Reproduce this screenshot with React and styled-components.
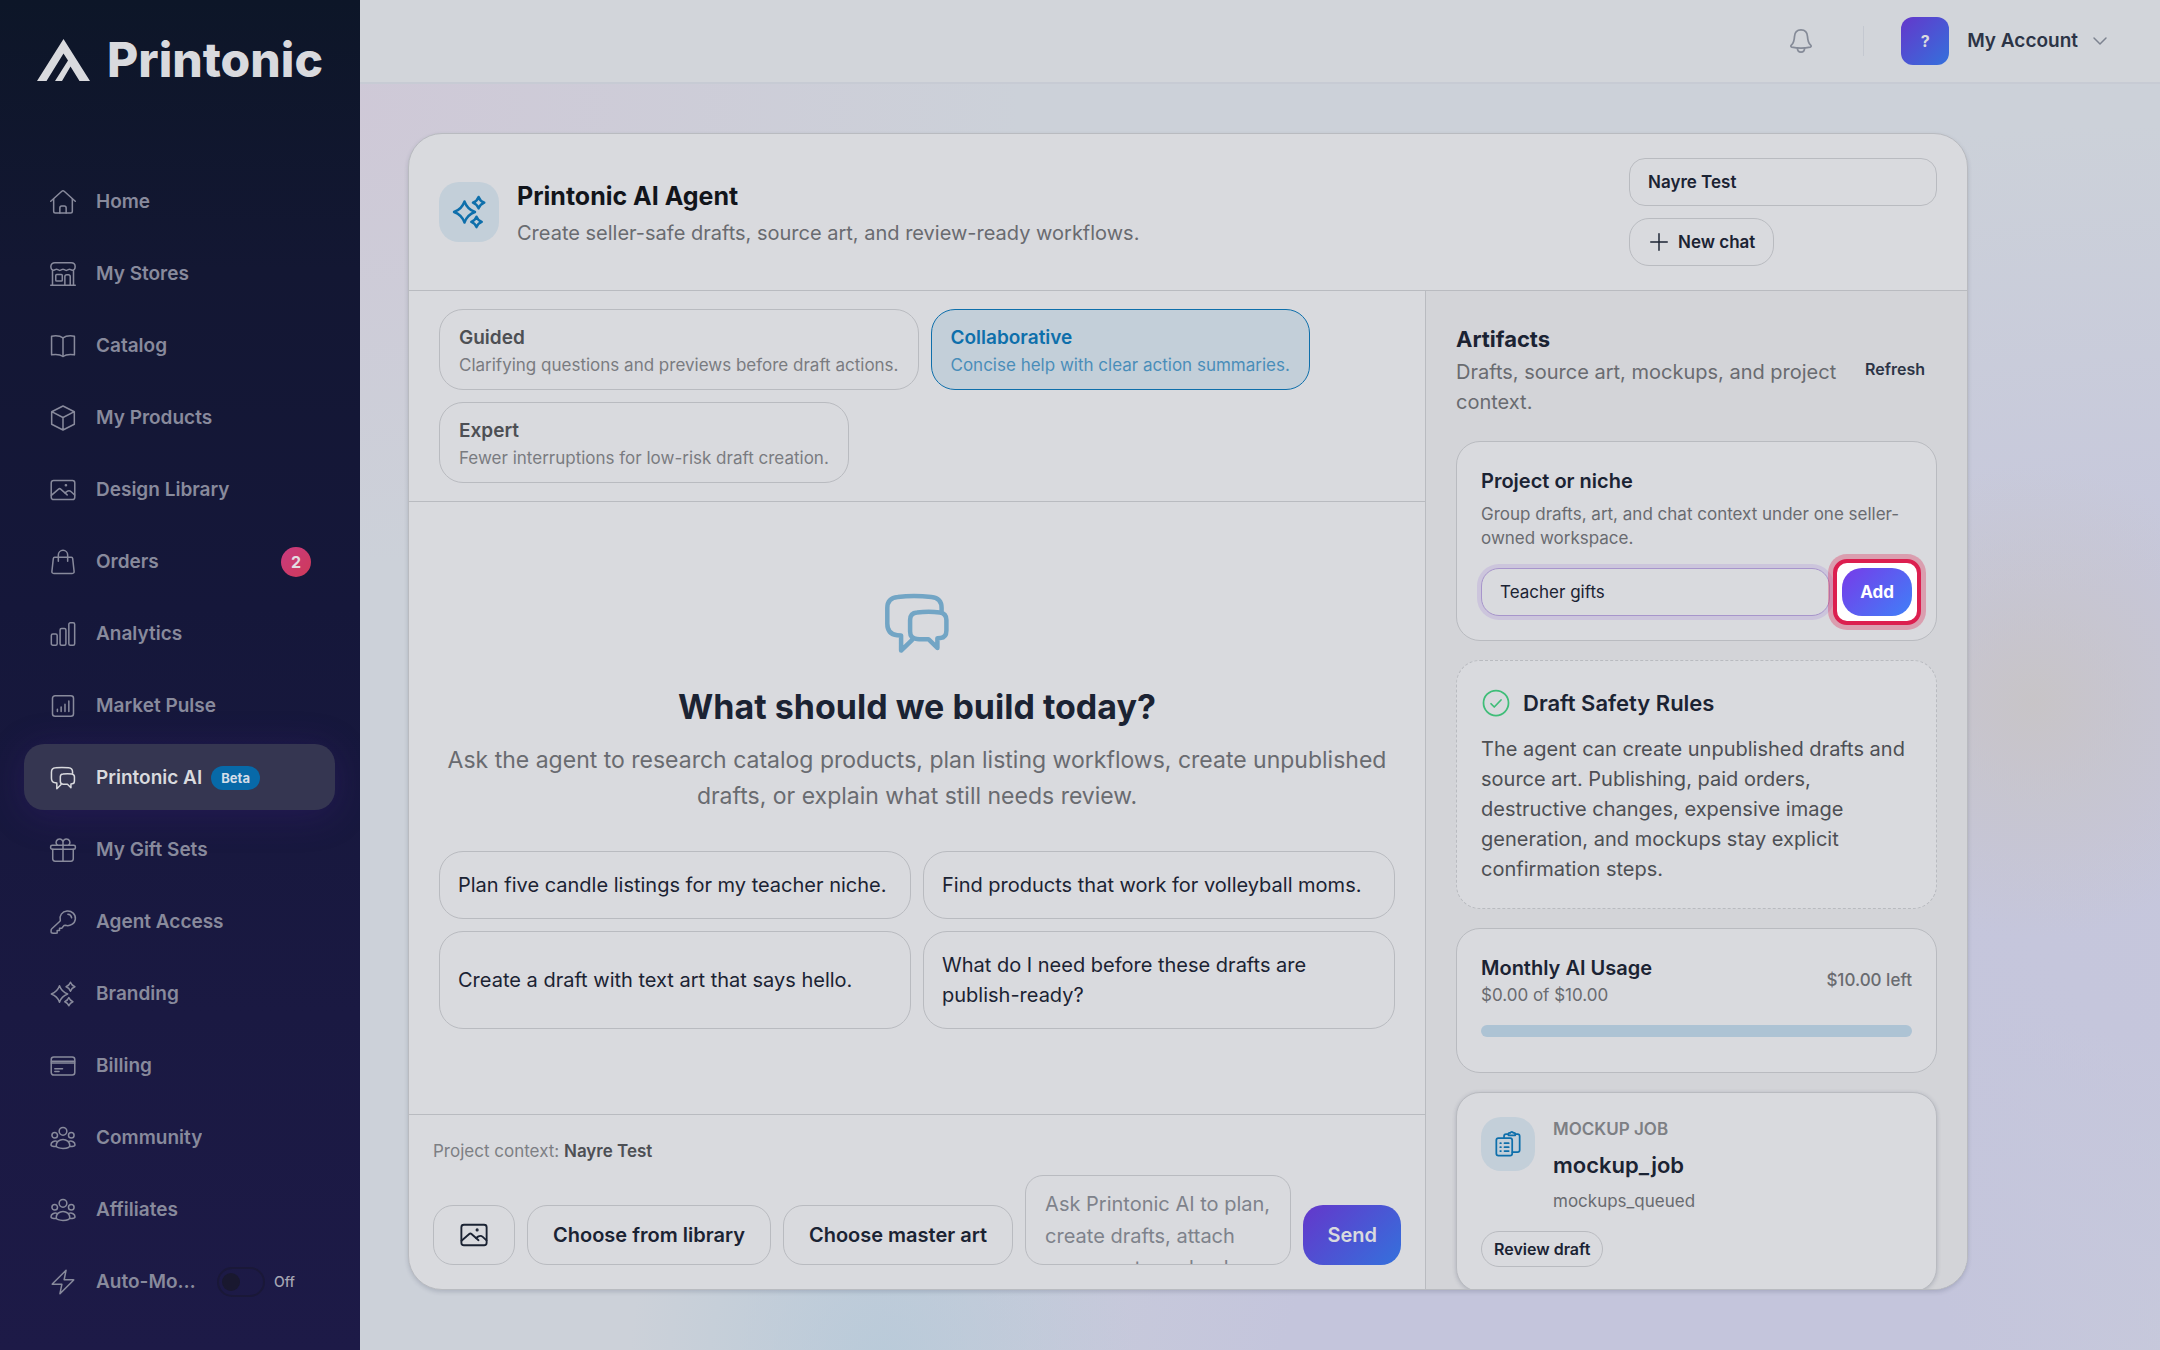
import React, { useState } from 'react';
import styled, { createGlobalStyle, css } from 'styled-components';

const c = {
  page: '#ccd1d9',
  surface: '#d9dade',
  panel: '#d3d4d8',
  line: '#b9bbc0',
  ink: '#1b2333',
  muted: '#696b70',
  soft: '#7d7f84',
  blue: '#0e6fab',
  blueSoft: '#c3cfd9',
  red: '#dc1f4f',
};

const GlobalStyle = createGlobalStyle`
  * {
    box-sizing: border-box;
  }

  body {
    margin: 0;
    background: ${c.page};
    color: ${c.ink};
    font-family: Inter, 'Open Sans', sans-serif;
    font-size: 20px;
    line-height: 30px;
    -webkit-font-smoothing: antialiased;
  }

  h1, h2, h3, p {
    margin: 0;
  }

  button, input, select, textarea {
    font: inherit;
    color: inherit;
    margin: 0;
  }

  button, select {
    cursor: pointer;
  }
`;

/* ---------- icons ---------- */

const Svg = styled.svg`
  flex: none;
  display: block;
  width: ${(p) => p.$size}px;
  height: ${(p) => p.$size}px;
  fill: none;
  stroke: currentColor;
  stroke-width: ${(p) => p.$stroke};
  stroke-linecap: round;
  stroke-linejoin: round;
`;

// four-pointed star around (x, y)
const star = (x, y, r) => {
  const k = r * 0.26;
  return `M${x} ${y - r}Q${x + k} ${y - k} ${x + r} ${y}Q${x + k} ${y + k} ${x} ${y + r}Q${x - k} ${y + k} ${x - r} ${y}Q${x - k} ${y - k} ${x} ${y - r}z`;
};

const icons = {
  home: (
    <>
      <path d="M1.5 11.4 11 2.8q1-.9 2 0l9.5 8.6" />
      <path d="M4 9.4v10.6q0 1.5 1.5 1.5h13q1.5 0 1.5-1.5V9.4" />
      <path d="M9.3 21.5v-4.4q0-1.6 1.6-1.6h2.2q1.6 0 1.6 1.6v4.4" />
    </>
  ),
  store: (
    <>
      <path d="M5 2.3h14c2 0 3.4 1.4 3.4 3.3s-1 3.2-2.4 3.2c-1.2 0-1.6-.9-2.4-.9s-1.5 1-2.8 1-1.9-1-2.8-1-1.5 1-2.8 1-1.9-1-2.8-1-1.2.9-2.4.9c-1.4 0-2.4-1.3-2.4-3.2S3 2.3 5 2.3z" />
      <path d="M3 9.2v12.200M21 9.2v12.200M1.5 21.7h21" />
      <rect x="5.8" y="12.4" width="5.6" height="5.7" rx=".8" />
      <path d="M13.6 21.5v-7.2q0-1.7 1.7-1.7h1.2q1.7 0 1.7 1.7v7.2" />
    </>
  ),
  book: (
    <>
      <path d="M12 5C9.5 3.2 6 3 2.2 3.6v16C6 19 9.5 19.2 12 21c2.5-1.8 6-2 9.8-1.4v-16C18 3 14.5 3.2 12 5z" />
      <path d="M12 5v16" />
    </>
  ),
  cube: <path d="M12 1.7l9.7 4.9v10.8L12 22.3l-9.7-4.9V6.6zM2.3 6.6l9.7 5 9.7-5M12 11.6v10.7" />,
  image: (
    <>
      <rect x="1.9" y="3.8" width="20.2" height="16.4" rx="2" />
      <path d="M2 16.6l6.2-5.400q.9-.8 1.8 0l5.6 5" />
      <path d="M13.6 14.4l2-1.3q1.8-1 3.4.4l3 2.8" />
      <circle cx="14.5" cy="7.9" r=".5" fill="currentColor" />
    </>
  ),
  bag: (
    <>
      <path d="M4.8 8h14.4q1 0 1.1 1l1.2 10.9q.2 1.9-1.6 1.9H4.1q-1.8 0-1.6-1.9L3.7 9q.1-1 1.1-1z" />
      <path d="M8 11.4V6a4 4 0 0 1 8 0v5.4" />
    </>
  ),
  bars: (
    <>
      <rect x="2" y="12" width="5" height="9.6" rx="1.3" />
      <rect x="9.5" y="7.2" width="5" height="14.4" rx="1.3" />
      <rect x="17" y="2.4" width="5" height="19.2" rx="1.3" />
    </>
  ),
  pulse: (
    <>
      <rect x="3" y="3.2" width="18" height="17.6" rx="2.2" />
      <path d="M7.2 16.8v-2M10.4 16.8v-4M13.7 16.8v-6.2M17 16.8V7.8" />
    </>
  ),
  chat: (
    <>
      <path d="M20.2 7.9V7c0-2.4-1.2-3.5-3.4-3.7-3.8-.4-7.8-.4-11.2 0C3.3 3.5 2.1 4.8 2.1 7v5.2c0 2.4 1.2 3.7 3.3 3.9l1.3.1v5l3.7-3.6" />
      <path d="M12 8.5c2.6-.3 5.2-.3 7.6 0 1.5.2 2.2 1 2.2 2.5v3.5c0 1.5-.7 2.4-2 2.5l-1 .1v3.2l-3-2.9c-1.3 0-2.5 0-3.8-.1-1.5-.1-2.3-1-2.3-2.5V11c0-1.5.8-2.4 2.3-2.5z" />
    </>
  ),
  gift: (
    <>
      <rect x="1.4" y="7.9" width="21.2" height="3.4" rx="1.3" />
      <path d="M3.2 11.3v8.3q0 2 2 2h13.6q2 0 2-2v-8.3M12 7.9v13.7" />
      <path d="M7.2 7.9a3 3 0 1 1 4.8-3 3 3 0 1 1 4.8 3M12 4.9v3" />
    </>
  ),
  key: (
    <>
      <path d="M9.7 10.6A6.6 6.3 0 1 1 14 14.8q-1.2 0-1.7.8l-1.2 1.7H9v1.9H7v2.3q-2.4.3-4.4 0-.8-.1-.8-.9v-1.4q0-.8.6-1.4l6.5-6q.7-.6.8-1.2z" />
      <path d="M16.2 5.4q2.8.2 3.2 3" />
    </>
  ),
  sparkles: (
    <>
      <path d={star(9, 12, 7)} />
      <path d={star(18.4, 5.8, 3.8)} />
      <path d={star(17, 18.6, 3.5)} />
    </>
  ),
  card: (
    <>
      <rect x="1.9" y="4.2" width="20.2" height="15.6" rx="2.2" />
      <path d="M2 7.9h20M2 9.4h20M5 14.3h6.6M5 16.7h3.6" />
    </>
  ),
  people: (
    <>
      <circle cx="12" cy="6.3" r="3.3" />
      <circle cx="4.9" cy="9.6" r="2.4" />
      <circle cx="19.1" cy="9.6" r="2.4" />
      <path d="M6.2 18.4c0-3 2.6-5.2 5.8-5.2s5.8 2.2 5.8 5.2c0 1.7-2.4 2.5-5.8 2.5s-5.8-.8-5.8-2.5z" />
      <path d="M7 14.9c-2.6-.8-5.3.7-5.3 3 0 1 1.6 1.3 4.5 1.3M17 14.9c2.6-.8 5.3.7 5.3 3 0 1-1.6 1.3-4.5 1.3" />
    </>
  ),
  bolt: <path d="M14.6 2L3 13.5q-.5.5.2.5h7.8L9.4 22 21 10.5q.5-.5-.2-.5H13z" />,
  bell: (
    <>
      <path d="M12 1.7c-3.7 0-5.8 2.7-6 6.2-.2 3.6-.6 5.8-2.7 7.7-1 .9-.9 1.7.2 2 5.6 1.2 11.400 1.2 17 0 1.100-.3 1.200-1.100.2-2-2.100-1.900-2.500-4.100-2.700-7.700-.2-3.500-2.300-6.200-6-6.200z" />
      <path d="M8.7 18.5c0 2.3 1.4 3.8 3.3 3.8s3.3-1.5 3.3-3.8" />
    </>
  ),
  chevron: <path d="M3 7.5l9 9 9-9" />,
  plus: <path d="M12 3v18M3 12h18" />,
  check: (
    <>
      <circle cx="12" cy="12" r="10" />
      <path d="M8 12.6l2.6 2.6 5.4-5.6" />
    </>
  ),
  clipboard: (
    <>
      <rect x="2" y="7" width="13.6" height="15" rx="1.8" />
      <path d="M8.6 6.8V5.4q0-1.8 1.8-1.8h1.8M18.4 3.6h1.8q1.8 0 1.8 1.8v11.8q0 1.8-1.8 1.8h-4.4" />
      <path d="M12.4 4.6V3.3q0-.8.8-.8h.8q.3-1 1.3-1t1.3 1h.8q.8 0 .8.8v1.3z" />
      <path d="M9 11.3h3.6M9 14.7h3.6M9 18.1h3.6M5.4 11.3h.5M5.4 14.7h.5M5.4 18.1h.5" />
    </>
  ),
};

const Icon = ({ name, size = 28, stroke = 1.3 }) => (
  <Svg viewBox="0 0 24 24" $size={size} $stroke={stroke} aria-hidden="true">
    {icons[name]}
  </Svg>
);

/* ---------- shell ---------- */

const Shell = styled.div`
  display: grid;
  grid-template-columns: 360px minmax(0, 1fr);
  height: 100vh;
`;

const Sidebar = styled.aside`
  background: linear-gradient(180deg, #0d1628 0%, #131733 20%, #15173a 45%, #1a1942 75%, #1d1a47 100%);
  overflow: hidden;
`;

const Logo = styled.a`
  display: flex;
  align-items: center;
  gap: 16px;
  height: 120px;
  padding: 0 37px;
  color: ${c.surface};
  text-decoration: none;
  font-size: 48px;
  font-weight: 800;
  line-height: 56px;
`;

const LogoMark = styled.svg`
  width: 54px;
  height: 42px;
  flex: none;
  fill: currentColor;
`;

const Nav = styled.nav`
  display: flex;
  flex-direction: column;
  gap: 6px;
  padding: 48px 25px 0 24px;
`;

const navItem = css`
  display: flex;
  align-items: center;
  height: 66px;
  padding: 2px 24px 0 25px;
  border-radius: 20px;
  color: #888a9c;
  font-size: 19px;
  font-weight: 600;
  text-decoration: none;
`;

const NavLink = styled.a`
  ${navItem}
  ${(p) =>
    p.$active &&
    css`
      background: #353651;
      color: #d9dade;
      box-shadow: 0 5px 36px rgba(70, 30, 140, 0.28);
    `}
`;

const NavToggle = styled.label`
  ${navItem}
  cursor: pointer;
`;

const NavText = styled.span`
  margin-left: 19px;
  overflow: hidden;
  text-overflow: ellipsis;
  white-space: nowrap;
  ${(p) => p.$short && 'width: 100px;'}
`;

const Beta = styled.span`
  margin-left: 9px;
  padding: 0 10px;
  border-radius: 12px;
  background: #0769a8;
  color: #d3dde8;
  font-size: 13px;
  font-weight: 700;
  line-height: 24px;
`;

const Count = styled.span`
  margin-left: auto;
  width: 30px;
  border-radius: 50%;
  background: linear-gradient(135deg, #c93a80, #cf3a58);
  color: #e3dbe2;
  font-size: 16px;
  font-weight: 700;
  line-height: 30px;
  text-align: center;
`;

const Switch = styled.input`
  appearance: none;
  flex: none;
  display: flex;
  align-items: center;
  width: 48px;
  height: 30px;
  margin-left: 21px;
  padding: 0 3px;
  border: 2px solid #1a1838;
  border-radius: 15px;
  cursor: pointer;

  &::before {
    content: '';
    width: 18px;
    height: 18px;
    border-radius: 50%;
    background: #19182f;
  }

  &:checked::before {
    margin-left: auto;
    background: ${c.blue};
  }
`;

const SwitchState = styled.span`
  margin-left: 9px;
  color: #a5a6b3;
  font-size: 14px;
  font-weight: 500;
`;

const Content = styled.div`
  display: flex;
  flex-direction: column;
  min-width: 0;
  min-height: 0;
  background:
    radial-gradient(circle at 93% 52%, rgba(200, 196, 197, 0.9), transparent 13%),
    radial-gradient(ellipse at 29% 101%, rgba(183, 202, 217, 0.9), transparent 14%),
    radial-gradient(ellipse at 0% 8%, rgba(207, 200, 215, 0.9), transparent 26%),
    radial-gradient(ellipse at 70% 110%, rgba(196, 197, 220, 1) 20%, transparent 50%),
    radial-gradient(ellipse at 105% 60%, rgba(198, 199, 220, 1) 20%, transparent 60%),
    ${c.page};
`;

const Topbar = styled.header`
  display: flex;
  flex: none;
  align-items: center;
  justify-content: flex-end;
  height: 84px;
  padding: 0 52px 0 0;
  border-bottom: 2px solid #c7cbd4;
  background: #d2d5da;
`;

const IconButton = styled.button`
  display: flex;
  padding: 0;
  border: 0;
  background: none;
  color: #858b98;
`;

const Divider = styled.span`
  width: 1px;
  height: 30px;
  margin: 0 37px 0 49px;
  background: #c4c8d0;
`;

const Account = styled.button`
  display: flex;
  align-items: center;
  padding: 0;
  border: 0;
  background: none;
  color: #2c3446;
  font-size: 19px;
  font-weight: 600;
`;

const Avatar = styled.span`
  width: 48px;
  margin-right: 18px;
  border-radius: 12px;
  background: linear-gradient(135deg, #6437cb, #3471dc);
  color: #d9dade;
  font-size: 16px;
  font-weight: 700;
  line-height: 48px;
`;

const AccountArrow = styled.span`
  margin-left: 14px;
  color: #7d8390;
`;

const Main = styled.main`
  flex: 1;
  min-height: 0;
  padding: 49px 48px 60px;
`;

/* ---------- agent card ---------- */

const AgentCard = styled.section`
  display: flex;
  flex-direction: column;
  max-width: 1560px;
  height: 100%;
  border: 1px solid ${c.line};
  border-radius: 34px;
  background: ${c.surface};
  box-shadow: 0 2px 4px rgba(40, 50, 80, 0.18);
  overflow: hidden;
`;

const AgentHeader = styled.header`
  display: flex;
  align-items: center;
  gap: 18px;
  padding: 24px 30px;
  border-bottom: 1px solid ${c.line};
`;

const Tile = styled.span`
  display: flex;
  flex: none;
  align-items: center;
  justify-content: center;
  width: ${(p) => p.$size}px;
  height: ${(p) => p.$size}px;
  border-radius: 20px;
  background: ${c.blueSoft};
  color: ${c.blue};
`;

const Title = styled.h1`
  margin-bottom: 2px;
  color: #12151b;
  font-size: 25px;
  font-weight: 700;
  line-height: 40px;
`;

const Muted = styled.p`
  color: ${c.muted};
`;

const HeaderTools = styled.div`
  display: flex;
  flex-direction: column;
  align-items: flex-start;
  gap: 12px;
  width: 308px;
  margin-left: auto;
`;

const ProjectSelect = styled.select`
  appearance: none;
  width: 100%;
  height: 48px;
  padding: 0 18px;
  border: 1px solid ${c.line};
  border-radius: 16px;
  background: transparent;
  font-size: 17px;
  font-weight: 600;
`;

const Button = styled.button`
  display: inline-flex;
  flex: none;
  align-items: center;
  justify-content: center;
  gap: 8px;
  height: ${(p) => (p.$small ? 48 : 60)}px;
  padding: 0 ${(p) => (p.$small ? 18 : 25)}px;
  border: 1px solid ${c.line};
  border-radius: 20px;
  background: transparent;
  font-size: ${(p) => (p.$small ? 17 : 20)}px;
  font-weight: 600;
  white-space: nowrap;
`;

const Columns = styled.div`
  display: grid;
  grid-template-columns: minmax(0, 1fr) 542px;
  flex: 1;
  min-height: 0;
`;

const Chat = styled.div`
  display: flex;
  flex-direction: column;
  min-height: 0;
`;

const Modes = styled.div`
  display: flex;
  flex-wrap: wrap;
  gap: 12px;
  padding: 18px 30px;
  border-bottom: 1px solid ${c.line};
`;

const Mode = styled.button`
  padding: 12px 19px;
  border: 1px solid ${(p) => (p.$on ? c.blue : c.line)};
  border-radius: 24px;
  background: ${(p) => (p.$on ? c.blueSoft : 'transparent')};
  color: ${(p) => (p.$on ? c.blue : '#4d4f54')};
  text-align: left;
`;

const ModeName = styled.span`
  display: block;
  font-size: 19px;
  font-weight: 600;
  line-height: 31px;
`;

const ModeHint = styled.span`
  display: block;
  font-size: 17px;
  line-height: 24px;
  opacity: 0.68;
`;

const Empty = styled.div`
  display: flex;
  flex: 1;
  flex-direction: column;
  align-items: center;
  justify-content: center;
  min-height: 0;
  padding: 0 30px;
  text-align: center;
`;

const EmptyIcon = styled.span`
  margin-bottom: 26px;
  color: #72a5c5;
`;

const EmptyTitle = styled.h2`
  margin-bottom: 13px;
  font-size: 34px;
  font-weight: 700;
  line-height: 44px;
`;

const EmptyText = styled.p`
  max-width: 960px;
  margin-bottom: 37px;
  color: ${c.muted};
  font-size: 23px;
  line-height: 36px;
`;

const Suggestions = styled.div`
  display: grid;
  grid-template-columns: 1fr 1fr;
  gap: 12px;
  width: 100%;
`;

const Suggestion = styled.button`
  padding: 18px;
  border: 1px solid ${c.line};
  border-radius: 24px;
  background: transparent;
  line-height: 30px;
  text-align: left;
`;

const Composer = styled.form`
  padding: 24px;
  border-top: 1px solid ${c.line};
`;

const Context = styled.p`
  margin-bottom: 12px;
  color: ${c.soft};
  font-size: 17px;
  line-height: 24px;

  strong {
    color: #4d4f54;
    font-weight: 600;
  }
`;

const ComposerRow = styled.div`
  display: flex;
  align-items: flex-end;
  gap: 12px;
`;

const Prompt = styled.textarea`
  display: block;
  flex: 1;
  min-width: 0;
  height: 90px;
  padding: 12px 19px;
  border: 1px solid ${c.line};
  border-radius: 18px;
  background: transparent;
  line-height: 32px;
  resize: none;
  overflow: hidden;

  &::placeholder {
    color: #7e828b;
  }
`;

const SendButton = styled(Button)`
  padding: 0 24px;
  border: 0;
  background: linear-gradient(135deg, #6437cb, #3471dc);
  color: #d9dade;
`;

/* ---------- artifacts panel ---------- */

const Panel = styled.aside`
  display: flex;
  flex-direction: column;
  gap: 19px;
  padding: 30px;
  border-left: 1px solid ${c.line};
  background: ${c.panel};
  min-height: 0;
  overflow: hidden;
`;

const PanelHead = styled.div`
  display: flex;
  align-items: center;
  justify-content: space-between;
  gap: 8px;
  margin-bottom: 5px;
`;

const PanelTitle = styled.h2`
  font-size: 22px;
  font-weight: ${(p) => p.$weight || 700};
  line-height: 36px;
`;

const Refresh = styled.button`
  padding: 0 12px;
  border: 0;
  background: none;
  color: #2c3446;
  font-size: 16px;
  font-weight: 600;
`;

const PanelCard = styled.section`
  flex: none;
  padding: 24px;
  border: 1px ${(p) => (p.$dashed ? 'dashed' : 'solid')} ${c.line};
  border-radius: 24px;
  background: ${c.surface};
  ${(p) => p.$raised && 'box-shadow: 0 1px 4px rgba(40, 50, 80, 0.22);'}
`;

const CardTitle = styled.h3`
  margin-bottom: ${(p) => (p.$spaced ? 6 : 0)}px;
  font-size: 20px;
  font-weight: 600;
`;

const Small = styled.p`
  color: ${c.muted};
  font-size: 17px;
  font-weight: ${(p) => p.$weight || 400};
  line-height: 24px;
`;

const NicheForm = styled.form`
  display: flex;
  gap: 12px;
  margin-top: 18px;
`;

const NicheInput = styled.input`
  flex: 1;
  min-width: 0;
  height: 48px;
  padding: 0 18px;
  border: 1px solid #a795cb;
  border-radius: 18px;
  outline: 0;
  background: ${c.surface};
  box-shadow: 0 0 0 4px #ccc5dc;
  font-size: 17px;
`;

// highlighted step around the Add button
const Spotlight = styled.span`
  position: relative;

  &::before {
    content: '';
    position: absolute;
    inset: -9px;
    border: 4px solid ${c.red};
    border-radius: 14px;
    background: #fff;
    box-shadow: 0 0 0 5px rgba(220, 31, 79, 0.32);
  }
`;

const AddButton = styled(Button)`
  position: relative;
  border: 0;
  background: linear-gradient(135deg, #773be9, #3f80f8);
  color: #fff;
  font-weight: 700;
`;

const RulesHead = styled.div`
  display: flex;
  align-items: center;
  gap: 12px;
  margin-bottom: 13px;

  svg {
    color: #3fbd78;
  }
`;

const Rules = styled.p`
  color: #4d4f54;
`;

const UsageHead = styled.div`
  display: flex;
  align-items: center;
  justify-content: space-between;
`;

const Meter = styled.div`
  height: 12px;
  margin: 18px 0 11px;
  border-radius: 6px;
  background: #adc3d4;
`;

const Job = styled.div`
  display: flex;
  gap: 18px;
  margin-bottom: 18px;
`;

const JobText = styled.div`
  display: grid;
  gap: 6px;
`;

const JobKind = styled(Small)`
  color: ${c.soft};
  text-transform: uppercase;
`;

const Pill = styled.button`
  height: 36px;
  padding: 0 12px;
  border: 1px solid ${c.line};
  border-radius: 18px;
  background: transparent;
  font-size: 16px;
  font-weight: 600;
`;

const navItems = [
  { icon: 'home', label: 'Home' },
  { icon: 'store', label: 'My Stores' },
  { icon: 'book', label: 'Catalog' },
  { icon: 'cube', label: 'My Products' },
  { icon: 'image', label: 'Design Library' },
  { icon: 'bag', label: 'Orders', count: 2 },
  { icon: 'bars', label: 'Analytics' },
  { icon: 'pulse', label: 'Market Pulse' },
  { icon: 'chat', label: 'Printonic AI', beta: true, active: true },
  { icon: 'gift', label: 'My Gift Sets' },
  { icon: 'key', label: 'Agent Access' },
  { icon: 'sparkles', label: 'Branding' },
  { icon: 'card', label: 'Billing' },
  { icon: 'people', label: 'Community' },
  { icon: 'people', label: 'Affiliates' },
];

const modes = [
  { name: 'Guided', hint: 'Clarifying questions and previews before draft actions.' },
  { name: 'Collaborative', hint: 'Concise help with clear action summaries.' },
  { name: 'Expert', hint: 'Fewer interruptions for low-risk draft creation.' },
];

const suggestions = [
  'Plan five candle listings for my teacher niche.',
  'Find products that work for volleyball moms.',
  'Create a draft with text art that says hello.',
  'What do I need before these drafts are publish-ready?',
];

const App = () => {
  const [mode, setMode] = useState('Collaborative');
  const [niche, setNiche] = useState('Teacher gifts');
  const [auto, setAuto] = useState(false);

  return (
    <Shell>
      <GlobalStyle />
      <Sidebar>
        <Logo href="#">
          <LogoMark viewBox="0 0 54 42" aria-hidden="true">
            <path d="M26.5 0L53 42H42.5L33.5 27.5 25 42H18L31 21.5 26.5 14.5 9.5 42H0z" />
          </LogoMark>
          Printonic
        </Logo>
        <Nav>
          {navItems.map((item) => (
            <NavLink key={item.label} href="#" $active={item.active}>
              <Icon name={item.icon} />
              <NavText>{item.label}</NavText>
              {item.beta && <Beta>Beta</Beta>}
              {item.count && <Count>{item.count}</Count>}
            </NavLink>
          ))}
          <NavToggle>
            <Icon name="bolt" />
            <NavText $short>Auto-Monitor</NavText>
            <Switch type="checkbox" checked={auto} onChange={() => setAuto(!auto)} />
            <SwitchState>{auto ? 'On' : 'Off'}</SwitchState>
          </NavToggle>
        </Nav>
      </Sidebar>

      <Content>
        <Topbar>
          <IconButton aria-label="Notifications">
            <Icon name="bell" size={26} stroke={1.6} />
          </IconButton>
          <Divider />
          <Account>
            <Avatar>?</Avatar>
            My Account
            <AccountArrow>
              <Icon name="chevron" size={16} stroke={2.2} />
            </AccountArrow>
          </Account>
        </Topbar>

        <Main>
          <AgentCard>
            <AgentHeader>
              <Tile $size={60}>
                <Icon name="sparkles" size={36} stroke={1.6} />
              </Tile>
              <div>
                <Title>Printonic AI Agent</Title>
                <Muted>Create seller-safe drafts, source art, and review-ready workflows.</Muted>
              </div>
              <HeaderTools>
                <ProjectSelect aria-label="Project" defaultValue="Nayre Test">
                  <option>Nayre Test</option>
                </ProjectSelect>
                <Button $small>
                  <Icon name="plus" size={22} stroke={1.6} />
                  New chat
                </Button>
              </HeaderTools>
            </AgentHeader>

            <Columns>
              <Chat>
                <Modes>
                  {modes.map((m) => (
                    <Mode key={m.name} $on={m.name === mode} onClick={() => setMode(m.name)}>
                      <ModeName>{m.name}</ModeName>
                      <ModeHint>{m.hint}</ModeHint>
                    </Mode>
                  ))}
                </Modes>

                <Empty>
                  <EmptyIcon>
                    <Icon name="chat" size={72} stroke={1.5} />
                  </EmptyIcon>
                  <EmptyTitle>What should we build today?</EmptyTitle>
                  <EmptyText>
                    Ask the agent to research catalog products, plan listing workflows, create
                    unpublished drafts, or explain what still needs review.
                  </EmptyText>
                  <Suggestions>
                    {suggestions.map((s) => (
                      <Suggestion key={s}>{s}</Suggestion>
                    ))}
                  </Suggestions>
                </Empty>

                <Composer onSubmit={(e) => e.preventDefault()}>
                  <Context>
                    Project context: <strong>Nayre Test</strong>
                  </Context>
                  <ComposerRow>
                    <Button type="button" aria-label="Attach image">
                      <Icon name="image" size={30} stroke={1.5} />
                    </Button>
                    <Button type="button">Choose from library</Button>
                    <Button type="button">Choose master art</Button>
                    <Prompt
                      aria-label="Message"
                      placeholder="Ask Printonic AI to plan, create drafts, attach source art, or check"
                    />
                    <SendButton>Send</SendButton>
                  </ComposerRow>
                </Composer>
              </Chat>

              <Panel>
                <PanelHead>
                  <div>
                    <PanelTitle>Artifacts</PanelTitle>
                    <Muted>Drafts, source art, mockups, and project context.</Muted>
                  </div>
                  <Refresh>Refresh</Refresh>
                </PanelHead>

                <PanelCard>
                  <CardTitle $spaced>Project or niche</CardTitle>
                  <Small>Group drafts, art, and chat context under one seller-owned workspace.</Small>
                  <NicheForm onSubmit={(e) => e.preventDefault()}>
                    <NicheInput
                      aria-label="Project or niche"
                      value={niche}
                      onChange={(e) => setNiche(e.target.value)}
                    />
                    <Spotlight>
                      <AddButton $small>Add</AddButton>
                    </Spotlight>
                  </NicheForm>
                </PanelCard>

                <PanelCard $dashed>
                  <RulesHead>
                    <Icon name="check" size={30} stroke={1.4} />
                    <PanelTitle as="h3" $weight={600}>
                      Draft Safety Rules
                    </PanelTitle>
                  </RulesHead>
                  <Rules>
                    The agent can create unpublished drafts and source art. Publishing, paid orders,
                    destructive changes, expensive image generation, and mockups stay explicit
                    confirmation steps.
                  </Rules>
                </PanelCard>

                <PanelCard>
                  <UsageHead>
                    <div>
                      <CardTitle>Monthly AI Usage</CardTitle>
                      <Small>$0.00 of $10.00</Small>
                    </div>
                    <Small $weight={500}>$10.00 left</Small>
                  </UsageHead>
                  <Meter />
                </PanelCard>

                <PanelCard $raised>
                  <Job>
                    <Tile $size={54}>
                      <Icon name="clipboard" size={28} stroke={1.5} />
                    </Tile>
                    <JobText>
                      <JobKind $weight={600}>Mockup job</JobKind>
                      <PanelTitle as="h3" $weight={600}>
                        mockup_job
                      </PanelTitle>
                      <Small>mockups_queued</Small>
                    </JobText>
                  </Job>
                  <Pill>Review draft</Pill>
                </PanelCard>
              </Panel>
            </Columns>
          </AgentCard>
        </Main>
      </Content>
    </Shell>
  );
};

export default App;
